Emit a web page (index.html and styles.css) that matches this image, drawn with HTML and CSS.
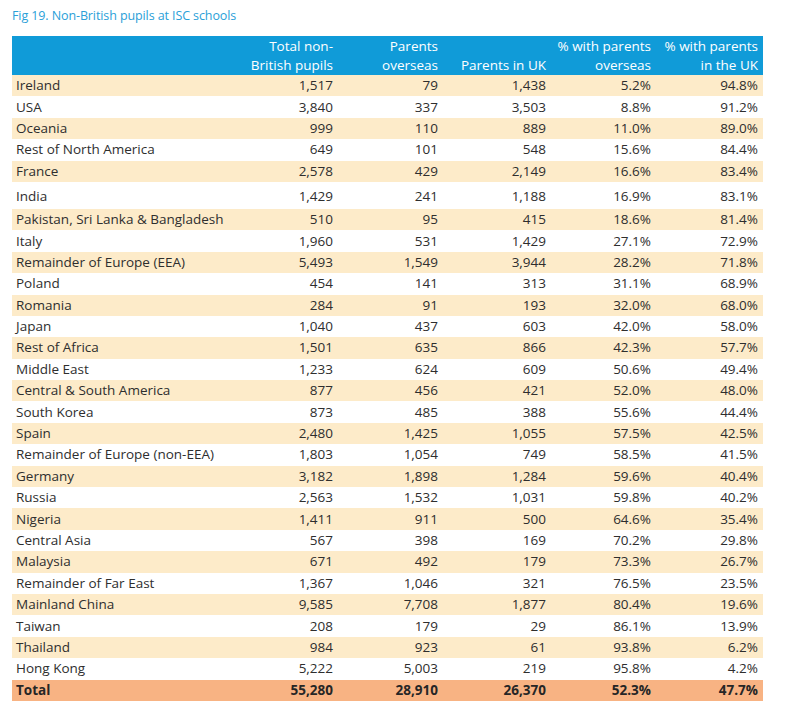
FILE: index.html
```html
<!DOCTYPE html>
<html>
<head>
<meta charset="utf-8">
<link rel="stylesheet" href="styles.css">
</head>
<body>
<div class="page">
  <h1 class="title">Fig 19. Non-British pupils at ISC schools</h1>
  <table class="data">
    <colgroup>
      <col class="c-name"><col class="c-total"><col class="c-over"><col class="c-uk"><col class="c-pover"><col class="c-puk">
    </colgroup>
    <thead>
      <tr>
        <th></th>
        <th>Total non-<br>British pupils</th>
        <th>Parents<br>overseas</th>
        <th>Parents in UK</th>
        <th>% with parents<br>overseas</th>
        <th>% with parents<br>in the UK</th>
      </tr>
    </thead>
    <tbody>
      <tr><td>Ireland</td><td>1,517</td><td>79</td><td>1,438</td><td>5.2%</td><td>94.8%</td></tr>
      <tr><td>USA</td><td>3,840</td><td>337</td><td>3,503</td><td>8.8%</td><td>91.2%</td></tr>
      <tr><td>Oceania</td><td>999</td><td>110</td><td>889</td><td>11.0%</td><td>89.0%</td></tr>
      <tr><td>Rest of North America</td><td>649</td><td>101</td><td>548</td><td>15.6%</td><td>84.4%</td></tr>
      <tr><td>France</td><td>2,578</td><td>429</td><td>2,149</td><td>16.6%</td><td>83.4%</td></tr>
      <tr class="tall"><td>India</td><td>1,429</td><td>241</td><td>1,188</td><td>16.9%</td><td>83.1%</td></tr>
      <tr><td>Pakistan, Sri Lanka &amp; Bangladesh</td><td>510</td><td>95</td><td>415</td><td>18.6%</td><td>81.4%</td></tr>
      <tr><td>Italy</td><td>1,960</td><td>531</td><td>1,429</td><td>27.1%</td><td>72.9%</td></tr>
      <tr><td>Remainder of Europe (EEA)</td><td>5,493</td><td>1,549</td><td>3,944</td><td>28.2%</td><td>71.8%</td></tr>
      <tr><td>Poland</td><td>454</td><td>141</td><td>313</td><td>31.1%</td><td>68.9%</td></tr>
      <tr><td>Romania</td><td>284</td><td>91</td><td>193</td><td>32.0%</td><td>68.0%</td></tr>
      <tr><td>Japan</td><td>1,040</td><td>437</td><td>603</td><td>42.0%</td><td>58.0%</td></tr>
      <tr><td>Rest of Africa</td><td>1,501</td><td>635</td><td>866</td><td>42.3%</td><td>57.7%</td></tr>
      <tr><td>Middle East</td><td>1,233</td><td>624</td><td>609</td><td>50.6%</td><td>49.4%</td></tr>
      <tr><td>Central &amp; South America</td><td>877</td><td>456</td><td>421</td><td>52.0%</td><td>48.0%</td></tr>
      <tr><td>South Korea</td><td>873</td><td>485</td><td>388</td><td>55.6%</td><td>44.4%</td></tr>
      <tr><td>Spain</td><td>2,480</td><td>1,425</td><td>1,055</td><td>57.5%</td><td>42.5%</td></tr>
      <tr><td>Remainder of Europe (non-EEA)</td><td>1,803</td><td>1,054</td><td>749</td><td>58.5%</td><td>41.5%</td></tr>
      <tr><td>Germany</td><td>3,182</td><td>1,898</td><td>1,284</td><td>59.6%</td><td>40.4%</td></tr>
      <tr><td>Russia</td><td>2,563</td><td>1,532</td><td>1,031</td><td>59.8%</td><td>40.2%</td></tr>
      <tr><td>Nigeria</td><td>1,411</td><td>911</td><td>500</td><td>64.6%</td><td>35.4%</td></tr>
      <tr><td>Central Asia</td><td>567</td><td>398</td><td>169</td><td>70.2%</td><td>29.8%</td></tr>
      <tr><td>Malaysia</td><td>671</td><td>492</td><td>179</td><td>73.3%</td><td>26.7%</td></tr>
      <tr><td>Remainder of Far East</td><td>1,367</td><td>1,046</td><td>321</td><td>76.5%</td><td>23.5%</td></tr>
      <tr><td>Mainland China</td><td>9,585</td><td>7,708</td><td>1,877</td><td>80.4%</td><td>19.6%</td></tr>
      <tr><td>Taiwan</td><td>208</td><td>179</td><td>29</td><td>86.1%</td><td>13.9%</td></tr>
      <tr><td>Thailand</td><td>984</td><td>923</td><td>61</td><td>93.8%</td><td>6.2%</td></tr>
      <tr><td>Hong Kong</td><td>5,222</td><td>5,003</td><td>219</td><td>95.8%</td><td>4.2%</td></tr>
    </tbody>
    <tfoot>
      <tr><td>Total</td><td>55,280</td><td>28,910</td><td>26,370</td><td>52.3%</td><td>47.7%</td></tr>
    </tfoot>
  </table>
</div>
</body>
</html>
```
FILE: styles.css
```css
html, body {
  margin: 0;
  padding: 0;
  background: #ffffff;
}
.page {
  padding: 7px 0 0 12px;
  font-family: "Open Sans", "Liberation Sans", sans-serif;
  color: #2e2e2e;
}
.title {
  margin: 0 0 11px 0;
  font-size: 12.5px;
  font-weight: normal;
  color: #2aa0d8;
  letter-spacing: -0.1px;
  line-height: 18px;
}
.data {
  border-collapse: collapse;
  table-layout: fixed;
  width: 751px;
  font-size: 13.5px;
}
.c-name { width: 221px; }
.c-total { width: 105px; }
.c-over { width: 105px; }
.c-uk { width: 108px; }
.c-pover { width: 105px; }
.c-puk { width: 107px; }
.data th {
  background: #109bd8;
  color: #ffffff;
  font-weight: normal;
  text-align: right;
  vertical-align: bottom;
  padding: 1px 5px 1px 4px;
  line-height: 18.5px;
  height: 39px;
  box-sizing: border-box;
  white-space: nowrap;
}
.data td {
  height: 21.4px;
  padding: 0 5px 0 4px;
  line-height: 21px;
  text-align: right;
  white-space: nowrap;
  box-sizing: border-box;
}
.data tr.tall td {
  height: 27px;
  padding-top: 3px;
}
.data td:first-child {
  text-align: left;
}
.data tbody tr:nth-child(odd) td {
  background: #fdebc9;
}
.data tfoot td {
  background: #f8b383;
  font-weight: bold;
  color: #262626;
}
```
